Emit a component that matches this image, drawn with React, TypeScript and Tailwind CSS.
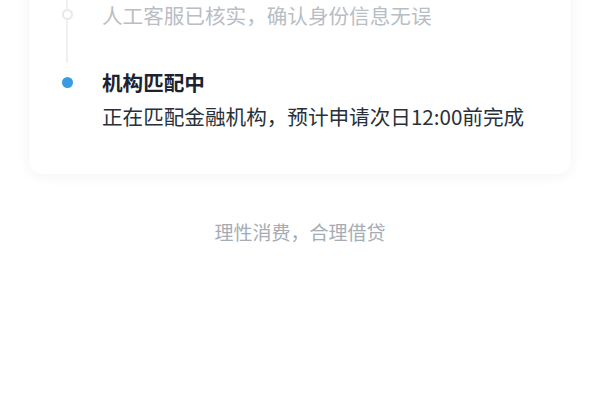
export default function App() {
  return (
    <div
      className="h-[400px] w-[600px] overflow-hidden bg-white"
      style={{ fontFamily: '"Noto Sans CJK SC", "Noto Sans", sans-serif' }}
    >
      <div className="mx-[29px] mt-[-30px] rounded-[14px] bg-white pb-[44px] shadow-[0_2px_14px_rgba(0,0,0,0.05)]">
        {/* finished step */}
        <div className="flex">
          <div className="flex w-[73px] flex-col items-center pl-[3px]">
            <div className="h-[39px] w-[2px] bg-[#eef0f3]" />
            <div className="h-[11px] w-[11px] rounded-full border-2 border-[#e6e8ec] bg-white" />
            <div className="w-[2px] flex-1 bg-[#eef0f3]" />
          </div>
          <div className="pb-[34px] pt-[31px] text-[20.6px] leading-[28px] text-[#b9bdc4]">
            人工客服已核实，确认身份信息无误
          </div>
        </div>
        {/* current step */}
        <div className="mt-[5px] flex">
          <div className="flex w-[73px] justify-center pl-[3px] pt-[9px]">
            <div className="h-[11px] w-[11px] rounded-full bg-[#3b9be0]" />
          </div>
          <div>
            <div className="text-[20.6px] font-bold leading-[28px] text-[#1c2330]">机构匹配中</div>
            <div className="mt-[6px] text-[20.6px] leading-[28px] text-[#27303b]">
              正在匹配金融机构，预计申请次日12:00前完成
            </div>
          </div>
        </div>
      </div>
      <div className="mt-[46px] text-center text-[19px] leading-[24px] text-[#a6acb4]">理性消费，合理借贷</div>
    </div>
  );
}
